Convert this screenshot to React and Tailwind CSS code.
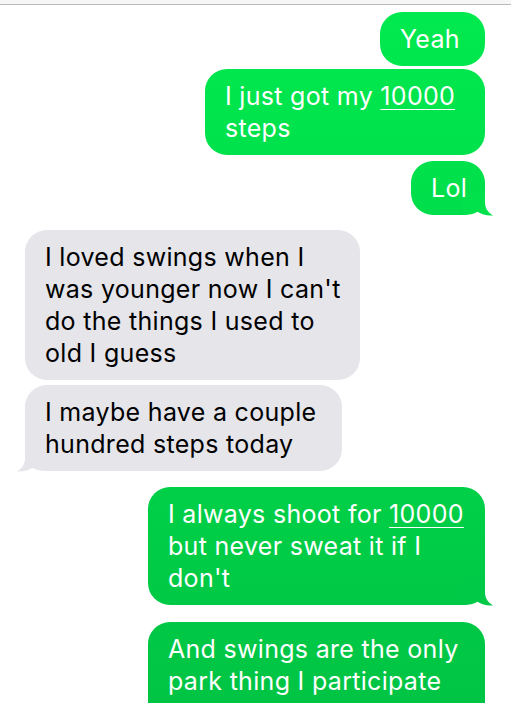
import React from 'react'

const GREEN = 'bg-fixed bg-linear-to-b from-[#00ea4e] to-[#00c444] text-white'
const GRAY = 'bg-[#e5e5ea] text-black'

function Tail({ side, color }) {
  // corner filler + curled tail, drawn for the right side and mirrored for the left
  return (
    <svg
      width="30"
      height="23"
      viewBox="0 0 30 23"
      className={`absolute bottom-[-1px] ${side === 'right' ? 'right-[-8px]' : 'left-[-8px] -scale-x-100'}`}
    >
      <path
        d="M0 0 H22 V9 C22 15.5 25 19.5 30 22.5 C24 23 18.5 21.5 14.5 18.8 C11 21 6 22 0 22 Z"
        fill={color}
      />
    </svg>
  )
}

function Bubble({ me, width, tail, tailColor, className = '', children }) {
  return (
    <div
      className={`relative rounded-[22px] py-[11px] pl-[20px] pr-[18px] text-[25px] leading-[32px] tracking-[0.3px] whitespace-nowrap ${
        me ? GREEN + ' self-end' : GRAY + ' self-start'
      } ${width} ${className}`}
    >
      {tail && <Tail side={me ? 'right' : 'left'} color={tailColor} />}
      <div className="relative">{children}</div>
    </div>
  )
}

const U = ({ children }) => (
  <span className="underline decoration-1 underline-offset-[4px]">{children}</span>
)

export default function App() {
  return (
    <div
      className="h-[703px] w-[511px] overflow-hidden bg-white"
      style={{ fontFamily: 'Inter, "Noto Sans", sans-serif' }}
    >
      <div className="h-[5px] border-b border-[#b9b9b9] bg-[#f6f6f6]" />
      <div className="flex flex-col pl-[25px] pr-[26px] pt-[7px]">
        <Bubble me width="w-[105px]">Yeah</Bubble>
        <Bubble me width="w-[280px]" className="mt-[3px]">
          I just got my <U>10000</U>
          <br />
          steps
        </Bubble>
        <Bubble me width="w-[74px]" className="mt-[6px]" tail tailColor="#00e14b">
          Lol
        </Bubble>

        <Bubble width="w-[335px]" className="mt-[15px]">
          I loved swings when I
          <br />
          was younger now I can't
          <br />
          do the things I used to
          <br />
          old I guess
        </Bubble>
        <Bubble width="w-[317px]" className="mt-[5px]" tail tailColor="#e5e5ea">
          I maybe have a couple
          <br />
          hundred steps today
        </Bubble>

        <Bubble me width="w-[337px]" className="mt-[16px]" tail tailColor="#00c947">
          I always shoot for <U>10000</U>
          <br />
          but never sweat it if I
          <br />
          don't
        </Bubble>
        <Bubble me width="w-[337px]" className="mt-[17px]">
          And swings are the only
          <br />
          park thing I participate
          <br />
          in lol
        </Bubble>
      </div>
    </div>
  )
}
